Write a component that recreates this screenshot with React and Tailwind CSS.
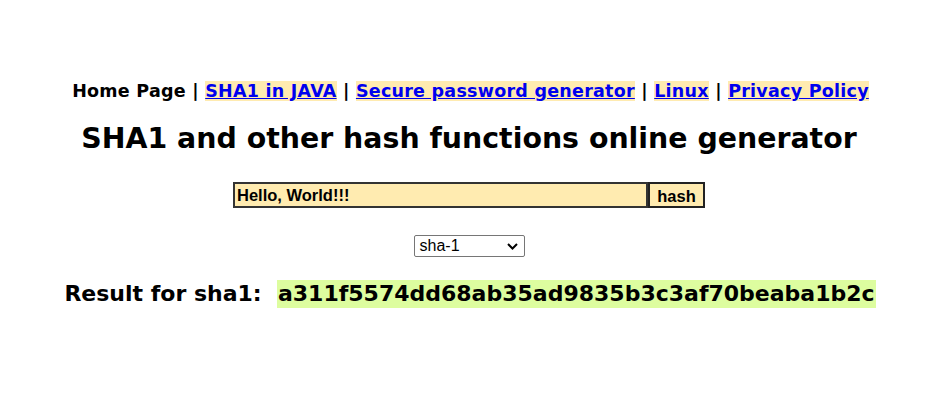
export default function App() {
  const links = ['SHA1 in JAVA', 'Secure password generator', 'Linux', 'Privacy Policy']
  return (
    <div className="min-h-[419px] bg-white text-black pt-[78px]">
      {/* Top menu */}
      <div className="text-center text-[17.5px] tracking-[0.25px] font-bold leading-[26px] mr-[5px] [font-family:'DejaVu_Sans',Verdana,sans-serif]">
        <span>Home Page</span>
        {links.map((l) => (
          <span key={l}>
            <span> | </span>
            <a href="#" className="text-[#0000ee] underline bg-[#ffebb0]">{l}</a>
          </span>
        ))}
      </div>

      <h1 className="text-center text-[28.4px] font-bold leading-[40px] mt-[15px] mr-[8px] [font-family:'DejaVu_Sans',Verdana,sans-serif]">
        SHA1 and other hash functions online generator
      </h1>

      <div className="flex justify-center mt-[23px] mr-[8px]">
        <input
          defaultValue="Hello, World!!!"
          className="w-[415px] h-[26px] px-[2px] bg-[#ffebb0] border-2 border-[#333] text-[16.5px] font-bold [font-family:'Liberation_Sans',Arial,sans-serif] outline-none"
        />
        <button className="w-[57px] h-[26px] bg-[#ffebb0] border-2 border-[#222] text-[16.5px] font-bold [font-family:'Liberation_Sans',Arial,sans-serif]">
          hash
        </button>
      </div>

      <div className="flex justify-center mt-[27px] mr-[8px]">
        <div className="relative w-[111px] h-[22px] border border-[#767676] rounded-[2px] bg-white flex items-center pl-[5px] text-[16px] [font-family:'Liberation_Sans',Arial,sans-serif]">
          <span>sha-1</span>
          <svg className="absolute right-[6px] top-[7px]" width="11" height="7" viewBox="0 0 11 7">
            <path d="M1 1l4.5 4.5L10 1" fill="none" stroke="#000" strokeWidth="2" />
          </svg>
        </div>
      </div>

      <div className="flex justify-center items-center mt-[23px] mr-[6px] text-[22px] font-bold leading-[28px] [font-family:'DejaVu_Sans',Verdana,sans-serif]">
        <span>Result for sha1:&nbsp;&nbsp;</span>
        <span className="bg-[#ddfd9f] px-[1px]">a311f5574dd68ab35ad9835b3c3af70beaba1b2c</span>
      </div>
    </div>
  )
}
